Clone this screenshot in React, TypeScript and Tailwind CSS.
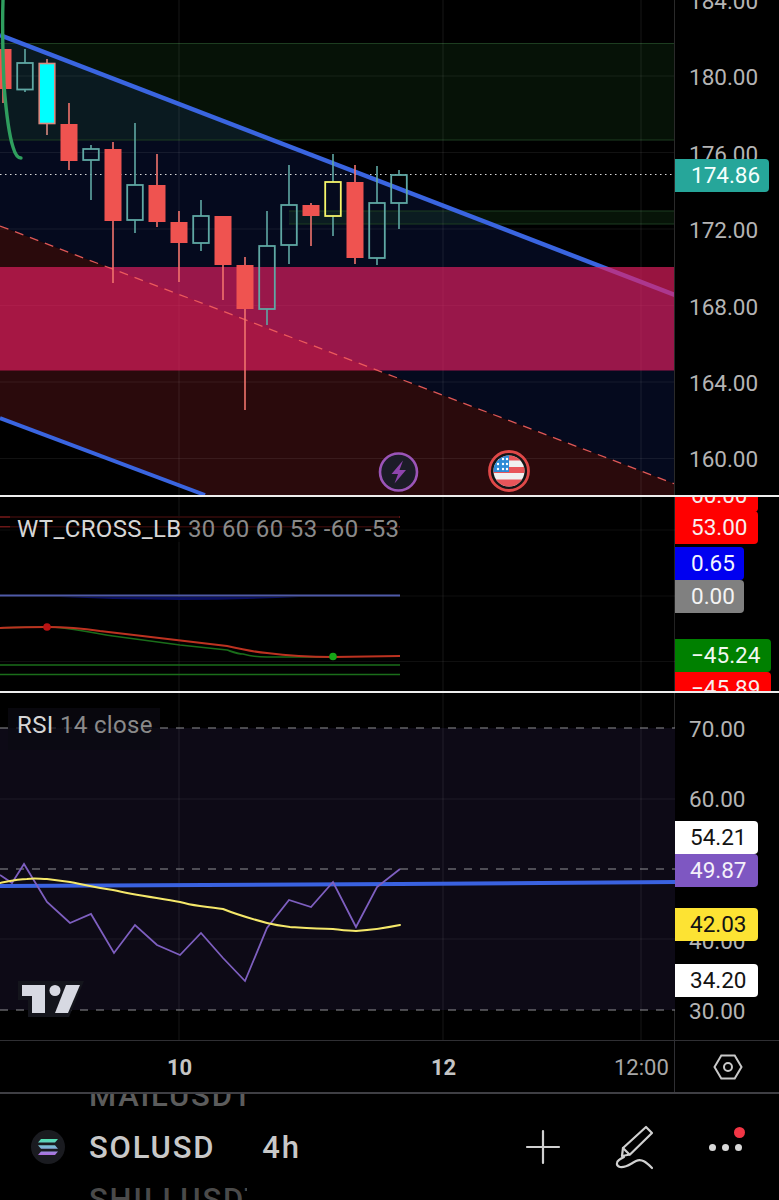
import React from "react";

type C = [number, number, number, number, number, "r" | "t" | "c" | "y"];
const candles: C[] = [
  [3, 25, 103, 49, 89, "r"],
  [25, 49, 92, 63, 89.5, "t"],
  [47, 59, 135, 63, 124, "c"],
  [69, 103, 170, 124, 161, "r"],
  [91, 145, 200, 149, 160, "t"],
  [113, 142, 283, 149, 221, "r"],
  [135, 123, 233, 185, 220, "t"],
  [157, 154, 227, 185, 222, "r"],
  [179, 211, 282, 222, 243, "r"],
  [201, 200, 251, 216, 243, "t"],
  [223, 216, 300, 216, 265, "r"],
  [245, 257, 410, 265, 309, "r"],
  [267, 211, 325, 246, 309, "t"],
  [289, 165, 264, 205, 245, "t"],
  [311, 203, 246, 205, 216, "r"],
  [333, 154, 236, 182, 216, "y"],
  [355, 165, 264, 182, 258, "r"],
  [377, 166, 265, 203, 258, "t"],
  [399, 170, 229, 175, 203, "t"],
];

const rsiLine =
  "0,875 12,883 24,864 47,902 70,923 91,914 114,953 135,925 157,945 180,955 201,933 223,958 245,981 267,928 289,900 311,907 333,882 356,927 377,887 400,869";
const rsiMa =
  "M0,883 C10,881 18,879 27,879 C35,878 40,879 47,879 C55,880 62,881 70,882 C85,885 98,888 113,890 C135,895 158,898 180,902 C187,904 193,905 200,906 C208,907 216,908 223,909 C238,915 252,919 267,923 C275,925 282,926 290,927 C305,928 318,929 333,929 C342,930 349,931 356,931 C372,930 386,928 400,925";

function Candle({ c }: { c: C }) {
  const [x, wt, wb, bt, bb, k] = c;
  if (k === "r") {
    return (
      <g>
        <line x1={x} x2={x} y1={wt} y2={wb} stroke="#f0736c" strokeWidth="1.6" />
        <rect x={x - 8.5} y={bt} width="17" height={bb - bt} fill="#ef5350" />
      </g>
    );
  }
  if (k === "c") {
    return (
      <g>
        <line x1={x} x2={x} y1={wt} y2={wb} stroke="#d98a80" strokeWidth="1.6" />
        <rect x={x - 7.8} y={bt + 0.5} width="15.6" height={bb - bt - 1} fill="#00ffff" stroke="#d98a80" strokeWidth="1.6" />
      </g>
    );
  }
  const col = k === "y" ? "#f5f56a" : "#5fa8a4";
  const wick = "#5fa8a4";
  return (
    <g>
      <line x1={x} x2={x} y1={wt} y2={bt} stroke={wick} strokeWidth="1.6" />
      <line x1={x} x2={x} y1={bb} y2={wb} stroke={wick} strokeWidth="1.6" />
      <rect x={x - 7.8} y={bt} width="15.6" height={bb - bt} fill="none" stroke={col} strokeWidth="1.8" />
    </g>
  );
}

const priceLabels = ["184.00", "180.00", "176.00", "172.00", "168.00", "164.00", "160.00"];
const rsiLabels = ["70.00", "60.00", "50.00", "40.00", "30.00"];

function GridV({ y1, y2 }: { y1: number; y2: number }) {
  return (
    <g stroke="#ffffff" strokeOpacity="0.09" strokeWidth="1">
      <line x1="179" x2="179" y1={y1} y2={y2} />
      <line x1="443" x2="443" y1={y1} y2={y2} />
      <line x1="641" x2="641" y1={y1} y2={y2} />
    </g>
  );
}

export default function App() {
  return (
    <div className="flex h-[1200px] w-[779px] flex-col overflow-hidden bg-black font-['Roboto',sans-serif] text-[22.5px] text-[#b4b4b4]">
      {/* Main price pane */}
      <div className="flex h-[497px] shrink-0 border-b-2 border-[#eeeeee]">
        <div className="relative w-[675px] shrink-0 overflow-hidden border-r border-[#2a2a2a]">
          <svg className="block h-[495px] w-[675px]" viewBox="0 0 675 495">
            <polygon points="0,35 675,295 675,484 0,226" fill="#050a1e" />
            <polygon points="0,226 675,484 675,495 205,495 0,418" fill="#2a0a0c" />
            <rect x="0" y="43" width="675" height="97" fill="#2e7d32" fillOpacity="0.14" />
            <line x1="0" x2="675" y1="43.5" y2="43.5" stroke="#1d3d20" />
            <line x1="0" x2="675" y1="140" y2="140" stroke="#1d3d20" />
            <rect x="289" y="211" width="386" height="13" fill="#2e7d32" fillOpacity="0.16" />
            <line x1="289" x2="675" y1="211" y2="211" stroke="#1d3d20" />
            <line x1="289" x2="675" y1="224" y2="224" stroke="#1d3d20" />
            <GridV y1={0} y2={495} />
            <g stroke="#ffffff" strokeOpacity="0.07">
              <line x1="0" x2="675" y1="76" y2="76" />
              <line x1="0" x2="675" y1="152.5" y2="152.5" />
              <line x1="0" x2="675" y1="229" y2="229" />
              <line x1="0" x2="675" y1="305.5" y2="305.5" />
              <line x1="0" x2="675" y1="382" y2="382" />
              <line x1="0" x2="675" y1="458.5" y2="458.5" />
            </g>
            <line x1="0" x2="675" y1="174.5" y2="174.5" stroke="#d8d8d8" strokeWidth="1.2" strokeDasharray="1.5 3.5" />
            <line x1="0" y1="35" x2="675" y2="295" stroke="#3a65e0" strokeWidth="4.5" />
            <line x1="0" y1="418" x2="205" y2="495" stroke="#3a65e0" strokeWidth="4" />
            <rect x="0" y="267" width="675" height="103.5" fill="#e91e63" fillOpacity="0.65" />
            <line x1="0" y1="226" x2="675" y2="484" stroke="#f4605e" strokeOpacity="0.9" strokeWidth="1.3" strokeDasharray="9 7" />
            {candles.map((c) => (
              <Candle key={c[0]} c={c} />
            ))}
            <path
              d="M3,0 C2,30 3,60 4,85 C6,110 9,135 13,147 C15,154 17,158 21,158"
              fill="none"
              stroke="#2f9e5e"
              strokeWidth="3.4"
              strokeLinecap="round"
            />
            <circle cx="398.5" cy="472" r="18.5" fill="#1c1c28" stroke="#9b55b8" strokeWidth="2.6" />
            <path d="M403,460.5 L391.5,474 L398,474 L394.5,483.5 L406,470 L399.5,470 Z" fill="#8e44ad" />
            <circle cx="509" cy="471" r="19.5" fill="#141416" stroke="#e04848" strokeWidth="2.8" />
            <clipPath id="flag">
              <circle cx="509" cy="471" r="15.5" />
            </clipPath>
            <g clipPath="url(#flag)">
              <rect x="493" y="455" width="32" height="32" fill="#f0f0f0" />
              <rect x="493" y="455.5" width="32" height="5" fill="#e8555a" />
              <rect x="493" y="467" width="32" height="6" fill="#e8555a" />
              <rect x="493" y="479.5" width="32" height="8" fill="#e8555a" />
              <rect x="493" y="455" width="16" height="17" fill="#2d8ad6" />
              <g fill="#ffffff">
                <circle cx="498" cy="459" r="1.2" />
                <circle cx="503" cy="459" r="1.2" />
                <circle cx="507" cy="459" r="1.2" />
                <circle cx="498" cy="464" r="1.2" />
                <circle cx="503" cy="464" r="1.2" />
                <circle cx="507" cy="464" r="1.2" />
                <circle cx="498" cy="469" r="1.2" />
                <circle cx="503" cy="469" r="1.2" />
                <circle cx="507" cy="469" r="1.2" />
              </g>
            </g>
          </svg>
        </div>
        <div className="relative flex-1 overflow-hidden">
          <div className="mt-[-37px] flex flex-col pl-[14px]">
            {priceLabels.map((p) => (
              <div key={p} className="flex h-[76.4px] items-center leading-none">
                {p}
              </div>
            ))}
          </div>
          <div className="absolute left-0 top-[159px] flex h-[33px] w-[94px] items-center rounded-r bg-[#26a69a] pl-[16px] text-[#f4fffd]">
            174.86
          </div>
        </div>
      </div>

      {/* WT_CROSS pane */}
      <div className="flex h-[196px] shrink-0 border-b-2 border-[#eeeeee]">
        <div className="relative w-[675px] shrink-0 border-r border-[#222222]">
          <svg className="block h-[194px] w-[675px]" viewBox="0 497 675 194">
            <GridV y1={497} y2={691} />
            <g stroke="#ffffff" strokeOpacity="0.06">
              <line x1="0" x2="675" y1="530" y2="530" />
              <line x1="0" x2="675" y1="596" y2="596" />
              <line x1="0" x2="675" y1="661.5" y2="661.5" />
            </g>
            <line x1="0" x2="400" y1="517" y2="517" stroke="#7a1a1a" strokeWidth="1.6" />
            <line x1="0" x2="400" y1="526.7" y2="526.7" stroke="#6b1717" strokeWidth="1.6" />
            <path d="M60,597 Q180,603 300,597 L60,597 Z" fill="#0a0f60" />
            <line x1="0" x2="400" y1="595.5" y2="595.5" stroke="#4f5aa8" strokeWidth="1.8" />
            <path
              d="M0,628 C15,627 30,627 47,627 C70,627 85,632 113,636 L180,645 L227,650 C233,652 238,654 243,654 C250,656 258,657 267,657 L333,657"
              fill="none"
              stroke="#1a6e1a"
              strokeWidth="1.6"
            />
            <path
              d="M0,628 C15,627 30,627 47,627 C70,627 80,628 100,631 L227,646 C240,649 255,652 267,653 C290,656 310,657 333,657 L400,656"
              fill="none"
              stroke="#bd3220"
              strokeWidth="2"
            />
            <line x1="0" x2="400" y1="665" y2="665" stroke="#1a6e1a" strokeWidth="1.4" />
            <line x1="0" x2="400" y1="674.5" y2="674.5" stroke="#1a6e1a" strokeWidth="1.4" />
            <circle cx="47" cy="627" r="3.8" fill="#b91313" />
            <circle cx="333" cy="656.5" r="3.8" fill="#16a516" />
          </svg>
          <div className="absolute left-[10px] top-[19px] whitespace-nowrap bg-black/55 pl-[7px] text-[24px] leading-[26px] tracking-[0.35px] text-[#8a8a8a]">
            <span className="text-[#d6d6d6]">WT_CROSS_LB</span> 30 60 60 53 -60 -53
          </div>
        </div>
        <div className="relative flex-1 overflow-hidden">
          <div className="absolute left-0 top-[-18px] flex h-[33px] w-[83px] items-center rounded-r bg-[#ff0000] pl-[16px] text-[#f4e8e8]">60.00</div>
          <div className="absolute left-0 top-[14px] flex h-[33px] w-[83px] items-center rounded-r bg-[#ff0000] pl-[16px] text-[#f8eeee]">53.00</div>
          <div className="absolute left-0 top-[50px] flex h-[33px] w-[69px] items-center rounded-r bg-[#0000f0] pl-[16px] text-[#f4f4ff]">0.65</div>
          <div className="absolute left-0 top-[83px] flex h-[33px] w-[69px] items-center rounded-r bg-[#808080] pl-[16px] text-[#f4f4f4]">0.00</div>
          <div className="absolute left-0 top-[142px] flex h-[33px] w-[96px] items-center rounded-r bg-[#008000] pl-[16px] text-[#f2f8f2]">−45.24</div>
          <div className="absolute left-0 top-[175px] flex h-[33px] w-[96px] items-center rounded-r bg-[#ff0000] pl-[16px] text-[#f8eeee]">−45.89</div>
        </div>
      </div>

      {/* RSI pane */}
      <div className="flex h-[347px] shrink-0">
        <div className="relative w-[675px] shrink-0 border-r border-[#2a2a2a]">
          <svg className="block h-[347px] w-[675px]" viewBox="0 693 675 347">
            <rect x="0" y="728" width="675" height="282" fill="#0d0a16" />
            <GridV y1={693} y2={1040} />
            <g stroke="#ffffff" strokeOpacity="0.07">
              <line x1="0" x2="675" y1="799" y2="799" />
              <line x1="0" x2="675" y1="939" y2="939" />
            </g>
            <g stroke="#8f8f94" strokeWidth="1.2" strokeDasharray="8 8">
              <line x1="0" x2="675" y1="728" y2="728" />
              <line x1="0" x2="675" y1="869" y2="869" />
              <line x1="0" x2="675" y1="1010" y2="1010" />
            </g>
            <path d="M0,886 L400,884 L675,882" fill="none" stroke="#3a62e0" strokeWidth="4" />
            <polyline points={rsiLine} fill="none" stroke="#7e5fc0" strokeWidth="1.8" />
            <path d={rsiMa} fill="none" stroke="#f5e86a" strokeWidth="2" strokeLinecap="round" />
            <path d="M18,981 H84 L69,1017 H28 V1000 H18 Z" fill="#14151c" />
            <path d="M22,985 H45 V1013 H32 V996 H22 Z" fill="#d7d9e2" />
            <circle cx="55" cy="990.5" r="5.5" fill="#d7d9e2" />
            <path d="M66,985 H80 L68,1013 H55 Z" fill="#d7d9e2" />
          </svg>
          <div className="absolute left-[8px] top-[15px] h-[42px] w-[152px] whitespace-nowrap bg-[#0c0a12]/70 pl-[9px] pt-[4px] text-[24px] leading-[26px] tracking-[0.35px] text-[#8a8a8a]">
            <span className="text-[#d6d6d6]">RSI</span>&nbsp;14 close
          </div>
        </div>
        <div className="relative flex-1 overflow-hidden">
          <div className="flex flex-col pl-[14px] pt-[1px]">
            {rsiLabels.map((p, i) => (
              <div key={p} className={i === 0 ? "mt-[16px] flex h-[38px] items-center leading-none" : "mt-[32.6px] flex h-[38px] items-center leading-none"}>
                {p}
              </div>
            ))}
          </div>
          <div className="absolute left-0 top-[128px] flex h-[33px] w-[83px] items-center rounded-r bg-white pl-[15px] text-[#131313]">54.21</div>
          <div className="absolute left-0 top-[161px] flex h-[33px] w-[83px] items-center rounded-r bg-[#7e57c2] pl-[15px] text-[#f4f0fa]">49.87</div>
          <div className="absolute left-0 top-[215px] flex h-[33px] w-[83px] items-center rounded-r bg-[#fde333] pl-[15px] text-[#131313]">42.03</div>
          <div className="absolute left-0 top-[271px] flex h-[33px] w-[83px] items-center rounded-r bg-white pl-[15px] text-[#131313]">34.20</div>
        </div>
      </div>

      {/* Time axis */}
      <div className="flex h-[54px] shrink-0 border-b-2 border-[#3f3f44]">
        <div className="relative flex h-full w-[675px] shrink-0 items-center border-r border-t border-[#2f2f33] pt-[2px] text-[22px]">
          <span className="absolute left-[167px] font-bold text-[#c4c4c4]">10</span>
          <span className="absolute left-[431px] font-bold text-[#c4c4c4]">12</span>
          <span className="absolute left-[614px] text-[#a8a8a8]">12:00</span>
        </div>
        <div className="flex flex-1 items-center justify-center border-t border-[#2f2f33] pl-[2px]">
          <svg width="30" height="28" viewBox="0 0 30 28" fill="none" stroke="#c8c8c8" strokeWidth="2">
            <path d="M1.5,14 L8.3,2.5 H21.7 L28.5,14 L21.7,25.5 H8.3 Z" />
            <circle cx="15" cy="14" r="4" />
          </svg>
        </div>
      </div>

      {/* Bottom toolbar */}
      <div className="relative flex flex-1 items-center overflow-hidden pl-[31px] pr-[37px]">
        <div className="absolute left-[89px] top-[-13px] text-[31px] font-medium leading-[30px] tracking-[1.8px] text-[#5c5c5c]">MAILUSDT</div>
        <div className="absolute left-[89px] top-[91px] w-[158px] overflow-hidden whitespace-nowrap text-[31px] font-medium leading-[30px] tracking-[1.8px] text-[#4a4a4a]">SHILLUSDT</div>
        <svg width="34" height="34" viewBox="0 0 34 34">
          <defs>
            <linearGradient id="sol" x1="0" y1="0" x2="0" y2="1">
              <stop offset="0" stopColor="#4fe0b0" />
              <stop offset="0.5" stopColor="#7fb8d8" />
              <stop offset="1" stopColor="#b06be0" />
            </linearGradient>
          </defs>
          <circle cx="17" cy="17" r="17" fill="#1a1b20" />
          <path d="M10,9 H27 L24,12.5 H7 Z M7,15.2 H24 L27,18.7 H10 Z M10,21.5 H27 L24,25 H7 Z" fill="url(#sol)" />
        </svg>
        <span className="ml-[24px] text-[31px] font-medium leading-none tracking-[1.8px] text-[#c8c8c8]">SOLUSD</span>
        <span className="ml-[47px] text-[31px] font-medium leading-none tracking-[1.8px] text-[#c8c8c8]">4h</span>
        <div className="ml-auto flex items-center gap-[52px]">
          <svg width="36" height="36" viewBox="0 0 36 36" stroke="#d0d0d0" strokeWidth="2.2" strokeLinecap="round">
            <path d="M18,2 V34 M2,18 H34" />
          </svg>
          <svg width="42" height="46" viewBox="0 0 42 46" fill="none" stroke="#d0d0d0" strokeWidth="2.2" strokeLinecap="round" strokeLinejoin="round">
            <path d="M10,24 L33,3 L39,9 L17,30.5 L9,32 Z" />
            <path d="M10,24 L16.5,30.5" />
            <path d="M39,44 C34,39 29,34 23,37 C17,40 13,44 7,43 C3,42 3,38 6,36 C7,35 9,34 11,33" />
          </svg>
          <div className="relative ml-[2px] flex items-center gap-[6px]">
            <span className="h-[7px] w-[7px] rounded-full bg-[#d8d8d8]" />
            <span className="h-[7px] w-[7px] rounded-full bg-[#d8d8d8]" />
            <span className="h-[7px] w-[7px] rounded-full bg-[#d8d8d8]" />
            <span className="absolute right-[-3px] top-[-17px] h-[11px] w-[11px] rounded-full bg-[#f23645]" />
          </div>
        </div>
      </div>
    </div>
  );
}
